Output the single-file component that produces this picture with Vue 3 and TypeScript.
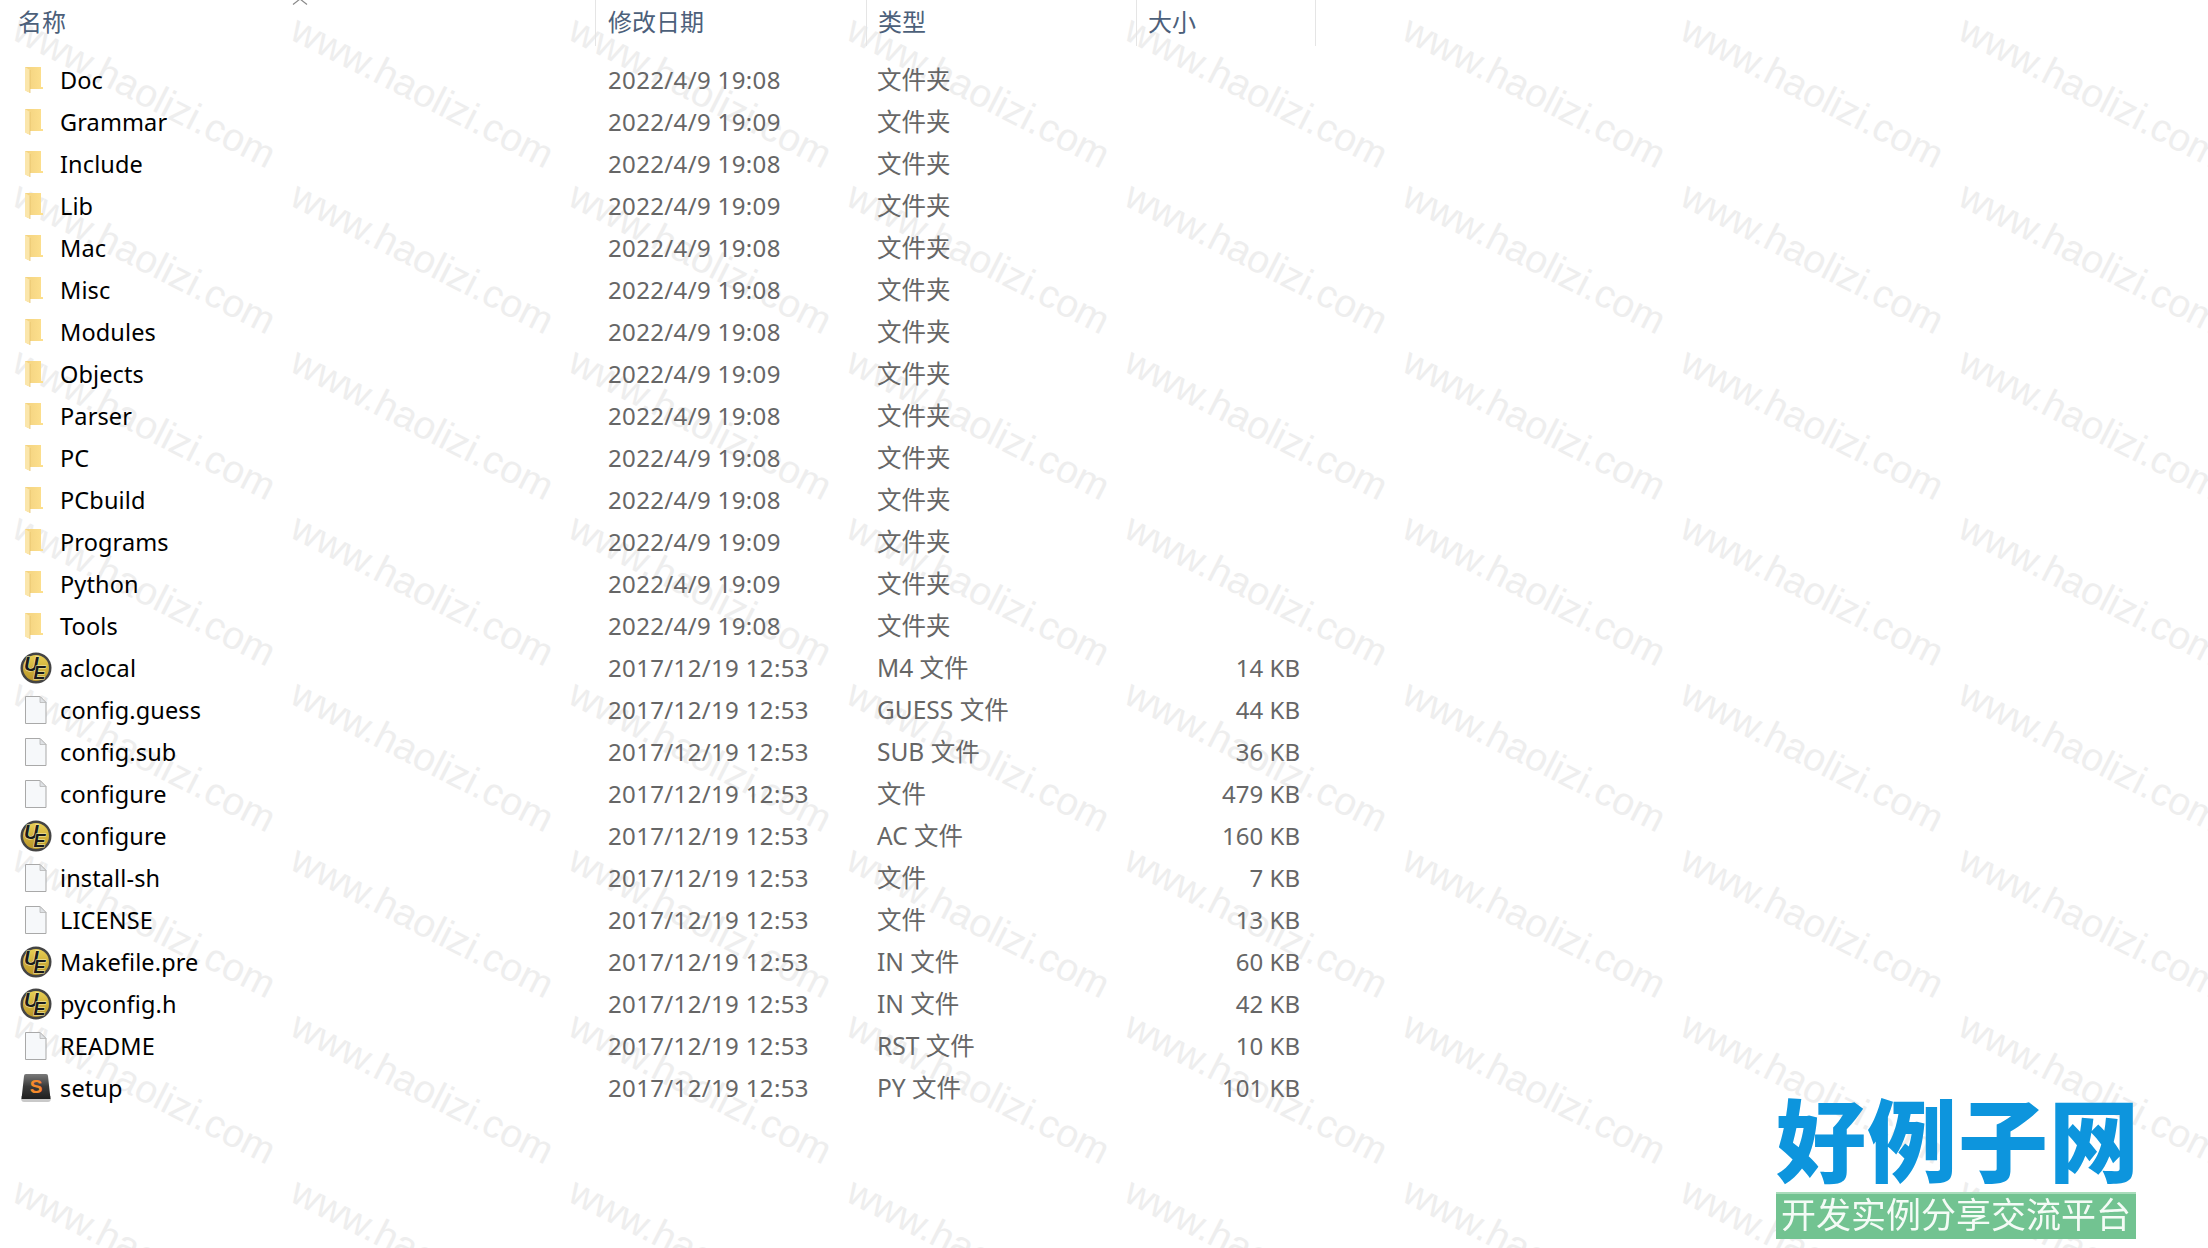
<script setup lang="ts">
type Kind = 'folder' | 'doc' | 'ue' | 'sublime'
interface Row { name: string; date: string; type: string; size: string; kind: Kind }

const folders: [string, string][] = [
  ['Doc', '19:08'], ['Grammar', '19:09'], ['Include', '19:08'], ['Lib', '19:09'],
  ['Mac', '19:08'], ['Misc', '19:08'], ['Modules', '19:08'], ['Objects', '19:09'],
  ['Parser', '19:08'], ['PC', '19:08'], ['PCbuild', '19:08'], ['Programs', '19:09'],
  ['Python', '19:09'], ['Tools', '19:08'],
]
const files: [string, string, string, Kind][] = [
  ['aclocal', 'M4 文件', '14 KB', 'ue'],
  ['config.guess', 'GUESS 文件', '44 KB', 'doc'],
  ['config.sub', 'SUB 文件', '36 KB', 'doc'],
  ['configure', '文件', '479 KB', 'doc'],
  ['configure', 'AC 文件', '160 KB', 'ue'],
  ['install-sh', '文件', '7 KB', 'doc'],
  ['LICENSE', '文件', '13 KB', 'doc'],
  ['Makefile.pre', 'IN 文件', '60 KB', 'ue'],
  ['pyconfig.h', 'IN 文件', '42 KB', 'ue'],
  ['README', 'RST 文件', '10 KB', 'doc'],
  ['setup', 'PY 文件', '101 KB', 'sublime'],
]
const rows: Row[] = [
  ...folders.map(([name, t]): Row => ({ name, date: `2022/4/9 ${t}`, type: '文件夹', size: '', kind: 'folder' })),
  ...files.map(([name, type, size, kind]): Row => ({ name, date: '2017/12/19 12:53', type, size, kind })),
]
const marks = Array.from({ length: 64 }, (_, i) => i)
</script>

<template>
  <div class="page">
    <div class="watermarks">
      <div v-for="m in marks" :key="m" class="mark-cell"><span class="mark">www.haolizi.com</span></div>
    </div>

    <div class="list">
      <div class="head">
        <div class="hcell first">
          名称
          <svg class="caret" width="16" height="5" viewBox="0 0 16 5"><path d="M1 4.5 L8 -1 L15 4.5" fill="none" stroke="#8a8a8a" stroke-width="1.2" /></svg>
        </div>
        <div class="hcell">修改日期</div>
        <div class="hcell">类型</div>
        <div class="hcell last">大小</div>
      </div>

      <div v-for="(r, i) in rows" :key="i" class="row">
        <div class="name">
          <span class="icon">
            <svg v-if="r.kind === 'folder'" width="32" height="32" viewBox="0 0 32 32">
              <defs>
                <linearGradient :id="`fb${i}`" x1="0" y1="0" x2="1" y2="0"><stop offset="0" stop-color="#f3d27f" /><stop offset="1" stop-color="#fde08e" /></linearGradient>
              </defs>
              <path d="M5 3 H21 V23 H23 V24.500 L23 25 H8 V28 L5 26 Z" :fill="`url(#fb${i})`" />
              <path d="M5 3 L10 6 V29 L5 26.500 Z" fill="#fbe6ab" />
              <path d="M10 6 V29" stroke="#e3bd66" stroke-width="0.7" />
            </svg>
            <svg v-else-if="r.kind === 'doc'" width="32" height="32" viewBox="0 0 32 32">
              <path d="M5.500 2.500 H20 L26 8.500 V29.500 H5.500 Z" fill="#f6f8fa" stroke="#a9a9a9" stroke-width="1" />
              <path d="M20 2.500 V8.500 H26 Z" fill="#dfe2e5" stroke="#b5b5b5" stroke-width="0.8" />
            </svg>
            <svg v-else-if="r.kind === 'ue'" width="32" height="32" viewBox="0 0 32 32">
              <defs>
                <linearGradient :id="`ue${i}`" x1="0" y1="0" x2="0" y2="1"><stop offset="0" stop-color="#e9cf55" /><stop offset="1" stop-color="#b99425" /></linearGradient>
              </defs>
              <circle cx="16" cy="16" r="15.500" fill="#444" />
              <circle cx="16" cy="16" r="13" :fill="`url(#ue${i})`" />
              <text x="4" y="19" class="ue-letter" font-size="20">U</text>
              <text x="13.500" y="27" class="ue-letter" font-size="18">E</text>
            </svg>
            <svg v-else width="32" height="32" viewBox="0 0 32 32">
              <defs>
                <linearGradient id="sb" x1="0" y1="0" x2="0" y2="1"><stop offset="0" stop-color="#7a7a7a" /><stop offset="0.5" stop-color="#3a3a3a" /><stop offset="1" stop-color="#1f1f1f" /></linearGradient>
              </defs>
              <path d="M1 26 Q1 30 4 30 H28 Q31 30 31 26 L31 24 H1 Z" fill="#c9c9c9" />
              <path d="M4 4 Q4 2 6 2 H26 Q28 2 28 4 L30.500 27 H1.500 Z" fill="url(#sb)" />
              <text x="16" y="21" class="sub-letter" font-size="19">S</text>
            </svg>
          </span>
          <span class="name-text">{{ r.name }}</span>
        </div>
        <div class="date">{{ r.date }}</div>
        <div class="type">{{ r.type }}</div>
        <div class="size">{{ r.size }}</div>
      </div>
    </div>

    <div class="logo">
      <div class="logo-title">好例子网</div>
      <div class="logo-sub">开发实例分享交流平台</div>
    </div>
  </div>
</template>

<style scoped>
.page {
  position: relative;
  width: 2208px;
  height: 1248px;
  overflow: hidden;
  background: #fff;
  font-family: "Noto Sans", "Noto Sans CJK SC", sans-serif;
}
.watermarks {
  position: absolute;
  left: 26px;
  top: 7px;
  display: grid;
  grid-template-columns: repeat(8, 278px);
  grid-auto-rows: 166px;
}
.mark-cell { height: 166px; }
.mark {
  display: block;
  width: 330px;
  font-family: "Liberation Sans", sans-serif;
  font-size: 39px;
  line-height: 44px;
  color: #eeeeee;
  transform: rotate(27deg);
  transform-origin: 0 0;
  white-space: nowrap;
}
.list {
  position: relative;
}
.head {
  display: grid;
  grid-template-columns: 595px 271px 270px 180px;
  height: 46px;
  margin-bottom: 13px;
  width: 1317px;
}
.hcell {
  position: relative;
  border-left: 1px solid #e5e5e5;
  padding-left: 11px;
  font-family: "Noto Sans CJK SC", sans-serif;
  font-size: 24px;
  line-height: 42px;
  color: #4c607a;
}
.hcell.first { border-left: none; padding-left: 18px; }
.hcell:nth-child(2) { padding-left: 12px; }
.hcell.last { border-right: 1px solid #e5e5e5; }
.caret { position: absolute; left: 292px; top: 0; }
.row {
  display: grid;
  grid-template-columns: 596px 269px 270px 165px;
  height: 42px;
  align-items: center;
  font-size: 24px;
  line-height: 42px;
  color: #666;
}
.name {
  display: flex;
  align-items: center;
  color: #000;
}
.icon {
  display: flex;
  width: 32px;
  height: 32px;
  margin-left: 20px;
  margin-right: 8px;
}
.name-text { letter-spacing: 0.12px; font-size: 23.5px; }
.date { padding-left: 12px; letter-spacing: 0.35px; }
.type { padding-left: 12px; font-size: 24.5px; }
.size { text-align: right; font-size: 24px; }
.ue-letter {
  font-family: "Liberation Sans", sans-serif;
  font-weight: 700;
  font-style: italic;
  fill: #1a1a1a;
  stroke: #f6eeb0;
  stroke-width: 1;
  paint-order: stroke;
}
.sub-letter {
  font-family: "Liberation Sans", sans-serif;
  font-weight: 700;
  fill: #f58a2b;
  text-anchor: middle;
}
.logo {
  position: absolute;
  left: 1776px;
  top: 1090px;
  width: 360px;
  display: flex;
  flex-direction: column;
  align-items: stretch;
}
.logo-title {
  height: 102px;
  font-family: "Noto Sans CJK SC", sans-serif;
  font-weight: 900;
  font-size: 90px;
  line-height: 92px;
  letter-spacing: 1px;
  color: #0d95dd;
  white-space: nowrap;
  filter: blur(0.6px);
}
.logo-sub {
  height: 45px;
  background: #72c391;
  border-top: 2px solid #a9dcbb;
  font-family: "Noto Sans CJK SC", sans-serif;
  font-size: 35px;
  line-height: 38px;
  color: #f4fbf6;
  text-align: center;
  white-space: nowrap;
  filter: blur(0.5px);
}
</style>
